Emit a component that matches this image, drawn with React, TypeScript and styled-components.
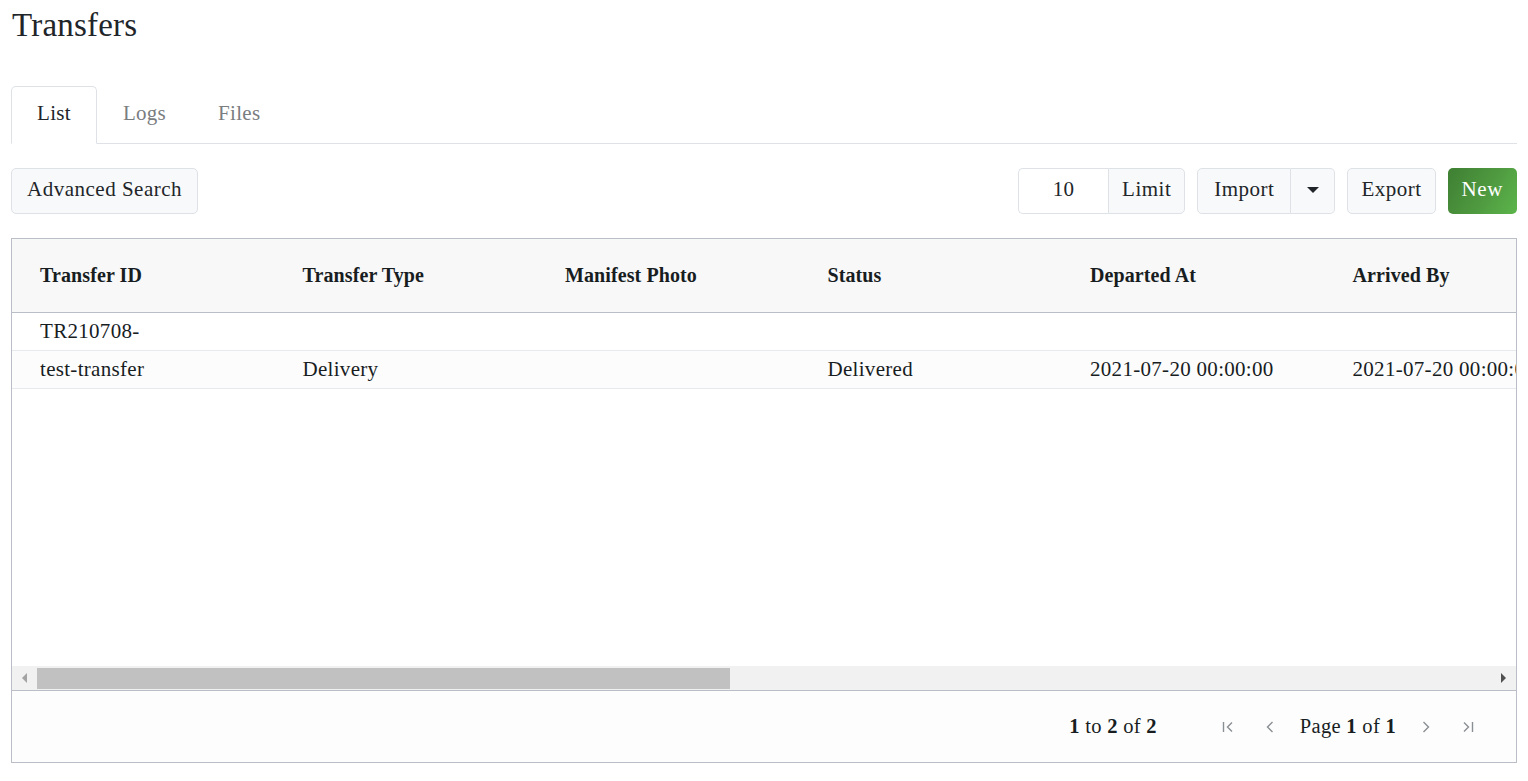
import React from "react";
import styled, { createGlobalStyle } from "styled-components";

const GlobalStyle = createGlobalStyle`
  html, body { margin: 0; padding: 0; background: #ffffff; }
  body {
    font-family: "Liberation Serif", "DejaVu Serif", serif;
    color: #212529;
    font-size: 21px;
    letter-spacing: 0.3px;
  }
  * { box-sizing: border-box; }
`;

const Page = styled.div`
  padding: 0 11px;
  width: 1528px;
`;

const Title = styled.h1`
  margin: 6px 0 0 1px;
  font-size: 33px;
  font-weight: 400;
  line-height: 38px;
  color: #212529;
  letter-spacing: 0.2px;
`;

const TabBar = styled.nav`
  display: flex;
  margin-top: 42px;
  border-bottom: 1px solid #dee2e6;
`;

const Tab = styled.div<{ $active?: boolean }>`
  height: 58px;
  padding: 0 25px 3px;
  display: flex;
  align-items: center;
  margin-bottom: -1px;
  border: 1px solid ${(p) => (p.$active ? "#dee2e6" : "transparent")};
  border-bottom-color: ${(p) => (p.$active ? "#ffffff" : "transparent")};
  border-radius: 5px 5px 0 0;
  background: ${(p) => (p.$active ? "#ffffff" : "transparent")};
  color: ${(p) => (p.$active ? "#212529" : "#7a7d80")};
`;

const Toolbar = styled.div`
  display: flex;
  align-items: center;
  margin-top: 24px;
  height: 46px;
`;

const Spacer = styled.div`
  flex: 1;
`;

const Button = styled.button<{ $left?: boolean; $right?: boolean; $pad?: number }>`
  height: 46px;
  padding: 0 ${(p) => p.$pad ?? 14}px 3px;
  font: inherit;
  letter-spacing: 0.5px;
  color: #212529;
  background: #f8f9fa;
  border: 1px solid #dee2e6;
  border-radius: ${(p) =>
    p.$left ? "0 5px 5px 0" : p.$right ? "5px 0 0 5px" : "5px"};
  display: flex;
  align-items: center;
  justify-content: center;
`;

const Group = styled.div<{ $ml?: number }>`
  display: flex;
  margin-left: ${(p) => p.$ml ?? 0}px;
`;

const LimitInput = styled.input`
  width: 90px;
  height: 46px;
  font: inherit;
  letter-spacing: inherit;
  text-align: center;
  color: #212529;
  border: 1px solid #dee2e6;
  border-right: none;
  border-radius: 5px 0 0 5px;
  background: #ffffff;
  padding: 0 0 3px;
  outline: none;
`;

const CaretButton = styled(Button)`
  width: 44px;
  padding: 0;
  border-left: none;
`;

const Caret = styled.span`
  width: 0;
  height: 0;
  border-left: 6px solid transparent;
  border-right: 6px solid transparent;
  border-top: 6px solid #212529;
  margin-top: -2px;
`;

const NewButton = styled.button`
  margin-left: 12px;
  height: 46px;
  padding: 0 14px 3px;
  font: inherit;
  letter-spacing: 0.6px;
  color: #ffffff;
  border: none;
  border-radius: 5px;
  background: linear-gradient(120deg, #3f7f33 0%, #4f9a40 55%, #5cb54b 100%);
`;

const Grid = styled.div`
  margin-top: 24px;
  border: 1px solid #babfc7;
  height: 525px;
  display: flex;
  flex-direction: column;
  color: #181d1f;
`;

const Viewport = styled.div`
  flex: 1;
  overflow: hidden;
  display: flex;
  flex-direction: column;
`;

const Row = styled.div<{ $bg?: string; $h: number; $line: string }>`
  display: grid;
  grid-template-columns: repeat(7, 262.5px);
  height: ${(p) => p.$h}px;
  background: ${(p) => p.$bg ?? "#ffffff"};
  border-bottom: 1px solid ${(p) => p.$line};
  flex-shrink: 0;
`;

const HeaderCell = styled.div`
  padding-left: 28px;
  display: flex;
  align-items: center;
  font-weight: 700;
  font-size: 20px;
  letter-spacing: 0.1px;
  white-space: nowrap;
`;

const Cell = styled.div`
  padding-left: 28px;
  display: flex;
  align-items: center;
  white-space: nowrap;
  overflow: hidden;
`;

const BodyFill = styled.div`
  flex: 1;
`;

const HScroll = styled.div`
  height: 25px;
  background: #f1f1f1;
  display: flex;
  align-items: center;
  border-bottom: 1px solid #babfc7;
  flex-shrink: 0;
`;

const ScrollArrow = styled.div<{ $dir: "left" | "right" }>`
  width: 25px;
  height: 25px;
  display: flex;
  align-items: center;
  justify-content: center;
  &::before {
    content: "";
    width: 0;
    height: 0;
    border-top: 5px solid transparent;
    border-bottom: 5px solid transparent;
    ${(p) =>
      p.$dir === "left"
        ? "border-right: 5px solid #a3a3a3;"
        : "border-left: 5px solid #505050;"}
  }
`;

const Track = styled.div`
  flex: 1;
  height: 25px;
  padding: 2px 0;
  display: flex;
`;

const Thumb = styled.div`
  background: #c1c1c1;
  height: 21px;
`;

const Paging = styled.div`
  height: 71px;
  background: #fdfdfd;
  display: flex;
  align-items: center;
  justify-content: flex-end;
  padding-right: 27px;
  flex-shrink: 0;
  color: #181d1f;
  letter-spacing: 0.3px;
  font-size: 20.5px;
`;

const Summary = styled.span`
  margin-right: 50px;
`;

const PageIcon = styled.span`
  width: 16px;
  height: 16px;
  display: inline-flex;
  align-items: center;
  justify-content: center;
  margin: 0 13px;
`;

const PageText = styled.span`
  margin: 0 9px;
`;

const Chevron = ({ kind }: { kind: "first" | "prev" | "next" | "last" }) => {
  const stroke = "#8a8f94";
  return (
    <svg width="16" height="16" viewBox="0 0 16 16" fill="none">
      {kind === "first" && (
        <>
          <path d="M3.5 3v10" stroke={stroke} strokeWidth="1.4" />
          <path d="M12 3.5L7.5 8l4.5 4.5" stroke={stroke} strokeWidth="1.4" />
        </>
      )}
      {kind === "prev" && (
        <path d="M10.5 3L5.5 8l5 5" stroke={stroke} strokeWidth="1.4" />
      )}
      {kind === "next" && (
        <path d="M5.5 3l5 5-5 5" stroke={stroke} strokeWidth="1.4" />
      )}
      {kind === "last" && (
        <>
          <path d="M4 3.5L8.5 8 4 12.5" stroke={stroke} strokeWidth="1.4" />
          <path d="M12.5 3v10" stroke={stroke} strokeWidth="1.4" />
        </>
      )}
    </svg>
  );
};

const columns = [
  "Transfer ID",
  "Transfer Type",
  "Manifest Photo",
  "Status",
  "Departed At",
  "Arrived By",
  "Arrived At",
];

const rows: string[][] = [
  ["TR210708-", "", "", "", "", "", ""],
  [
    "test-transfer",
    "Delivery",
    "",
    "Delivered",
    "2021-07-20 00:00:00",
    "2021-07-20 00:00:00",
    "",
  ],
];

export default function App() {
  return (
    <>
      <GlobalStyle />
      <Page>
        <Title>Transfers</Title>
        <TabBar>
          <Tab $active>List</Tab>
          <Tab>Logs</Tab>
          <Tab>Files</Tab>
        </TabBar>
        <Toolbar>
          <Button $pad={15}>Advanced Search</Button>
          <Spacer />
          <Group>
            <LimitInput defaultValue="10" />
            <Button $left $pad={13}>Limit</Button>
          </Group>
          <Group $ml={12}>
            <Button $right $pad={16}>Import</Button>
            <CaretButton $left>
              <Caret />
            </CaretButton>
          </Group>
          <Group $ml={12}>
            <Button $pad={13}>Export</Button>
          </Group>
          <NewButton>New</NewButton>
        </Toolbar>
        <Grid>
          <Viewport>
            <Row $h={74} $bg="#f8f8f8" $line="#babfc7">
              {columns.map((c) => (
                <HeaderCell key={c}>{c}</HeaderCell>
              ))}
            </Row>
            {rows.map((r, i) => (
              <Row
                key={i}
                $h={38}
                $bg={i % 2 === 0 ? "#ffffff" : "#fcfcfc"}
                $line="#e6e9ee"
              >
                {r.map((v, j) => (
                  <Cell key={j}>{v}</Cell>
                ))}
              </Row>
            ))}
            <BodyFill />
          </Viewport>
          <HScroll>
            <ScrollArrow $dir="left" />
            <Track>
              <Thumb style={{ width: `${(693 / 1455) * 100}%` }} />
            </Track>
            <ScrollArrow $dir="right" />
          </HScroll>
          <Paging>
            <Summary>
              <b>1</b> to <b>2</b> of <b>2</b>
            </Summary>
            <PageIcon>
              <Chevron kind="first" />
            </PageIcon>
            <PageIcon>
              <Chevron kind="prev" />
            </PageIcon>
            <PageText>
              Page <b>1</b> of <b>1</b>
            </PageText>
            <PageIcon>
              <Chevron kind="next" />
            </PageIcon>
            <PageIcon>
              <Chevron kind="last" />
            </PageIcon>
          </Paging>
        </Grid>
      </Page>
    </>
  );
}
